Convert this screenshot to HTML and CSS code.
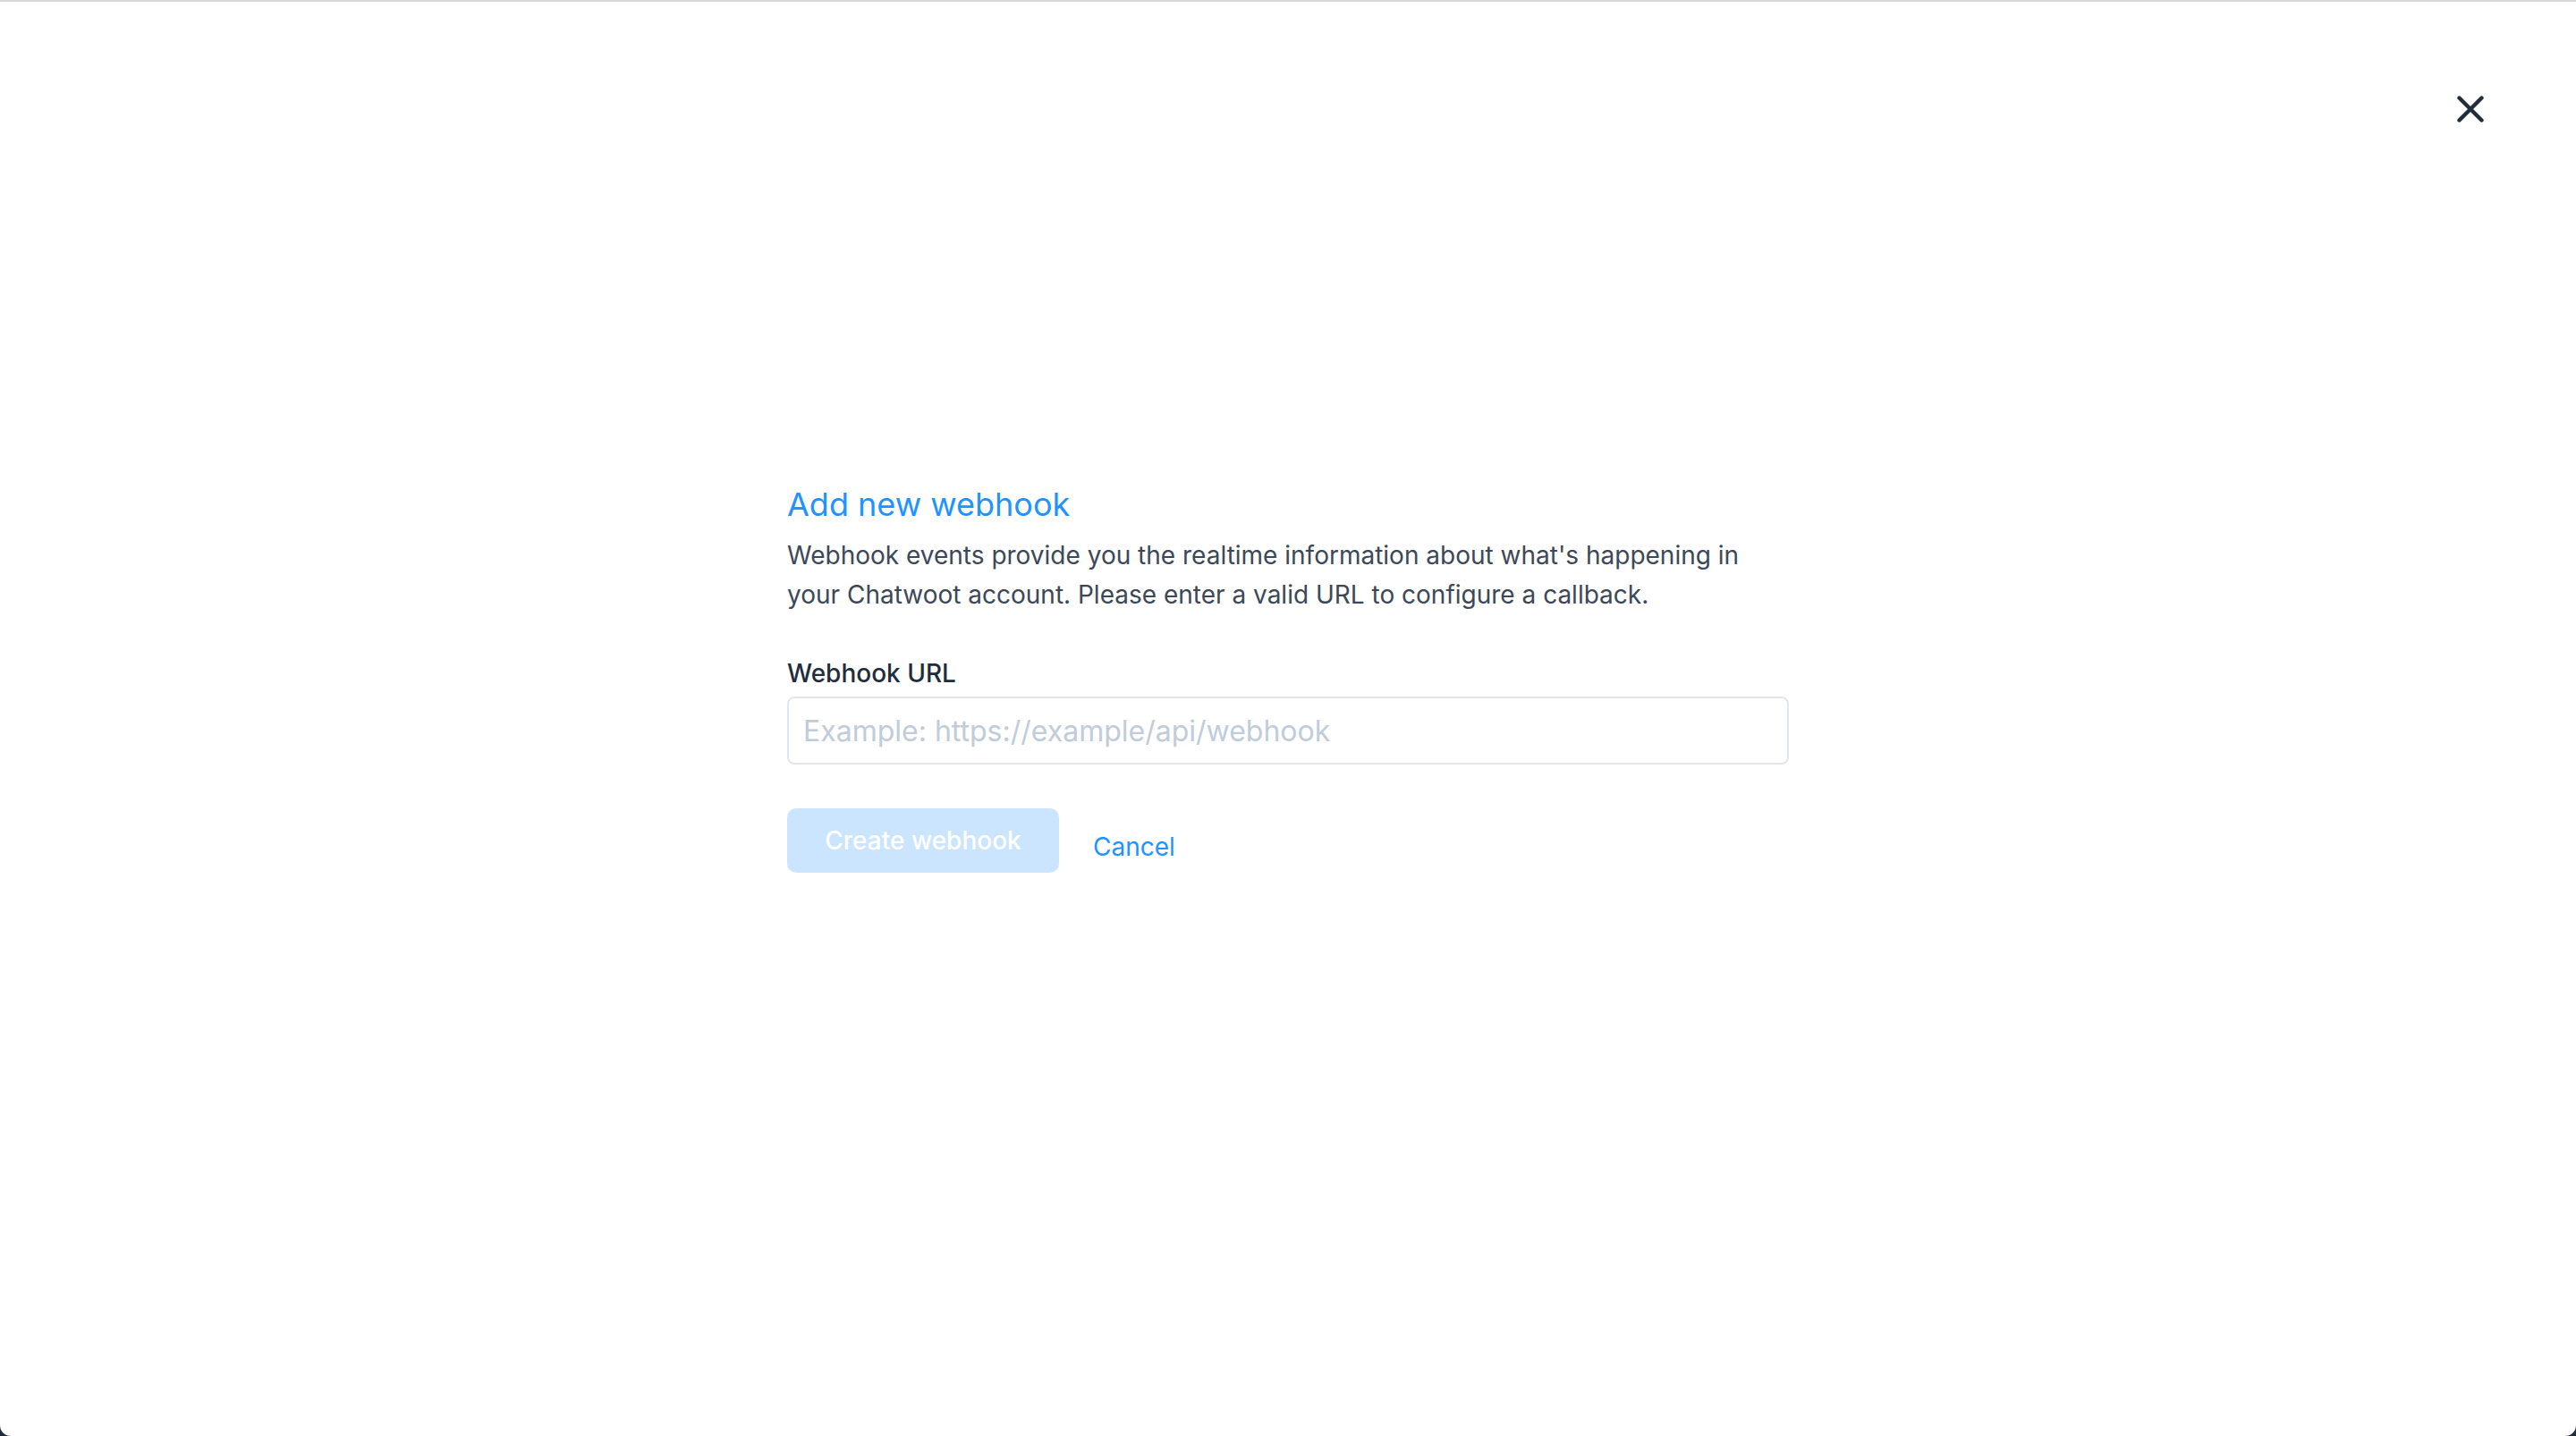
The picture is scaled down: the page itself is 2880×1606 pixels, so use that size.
FILE: index.html
```html
<!DOCTYPE html>
<html lang="en">
<head>
<meta charset="utf-8">
<title>Add new webhook</title>
<link rel="stylesheet" href="styles.css">
</head>
<body>
<div class="panel">
  <div class="header">
    <button class="close" aria-label="Close">
      <svg width="30" height="30" viewBox="0 0 30 30" fill="none" stroke="#1f2d3d" stroke-width="4.4" stroke-linecap="round">
        <path d="M2.5 2.5 L27.5 27.5 M27.5 2.5 L2.5 27.5"/>
      </svg>
    </button>
  </div>
  <div class="content">
    <h2 class="title">Add new webhook</h2>
    <p class="desc">Webhook events provide you the realtime information about what's happening in your Chatwoot account. Please enter a valid URL to configure a callback.</p>
    <label class="label" for="url">Webhook URL</label>
    <input id="url" class="input" type="text" placeholder="Example: https://example/api/webhook">
    <div class="actions">
      <button class="btn-primary" disabled>Create webhook</button>
      <a class="cancel" href="#">Cancel</a>
    </div>
  </div>
</div>
</body>
</html>
```

FILE: styles.css
```css
html, body {
  margin: 0;
  padding: 0;
}
body {
  background: #1f2d3d;
  font-family: Inter, "Noto Sans", sans-serif;
  width: 2880px;
  height: 1606px;
  overflow: hidden;
}
.panel {
  box-sizing: border-box;
  width: 2880px;
  height: 1606px;
  background: #ffffff;
  border-top: 2px solid #d5d9de;
  border-radius: 0 0 12px 12px;
  display: flex;
  flex-direction: column;
}
.header {
  display: flex;
  justify-content: flex-end;
  padding: 92px 90px 0 0;
}
.close {
  width: 56px;
  height: 56px;
  border: none;
  background: transparent;
  padding: 0;
  display: flex;
  align-items: center;
  justify-content: center;
  cursor: pointer;
}
.content {
  width: 1120px;
  margin: 390px auto 0;
  display: flex;
  flex-direction: column;
}
.title {
  margin: 0;
  font-size: 36px;
  line-height: 48px;
  font-weight: 400;
  color: #1f93ff;
}
.desc {
  margin: 11px 0 0;
  font-size: 28px;
  line-height: 44px;
  color: #3c4858;
}
.label {
  margin-top: 44px;
  font-size: 28px;
  line-height: 44px;
  font-weight: 500;
  color: #1f2d3d;
}
.input {
  box-sizing: border-box;
  margin-top: 4px;
  width: 1120px;
  height: 76px;
  border: 2px solid #e0e6ed;
  border-radius: 8px;
  padding: 0 16px;
  font-family: Inter, "Noto Sans", sans-serif;
  font-size: 32px;
  color: #1f2d3d;
  outline: none;
}
.input::placeholder {
  color: #c0ccda;
}
.actions {
  margin-top: 49px;
  display: flex;
  align-items: center;
  gap: 38px;
}
.btn-primary {
  height: 72px;
  width: 304px;
  border: none;
  border-radius: 10px;
  background: #cce5fe;
  color: #ffffff;
  font-family: Inter, "Noto Sans", sans-serif;
  font-size: 28px;
  font-weight: 500;
  padding: 0;
}
.cancel {
  padding-top: 14px;
  font-size: 28px;
  color: #1f93ff;
  text-decoration: none;
}
```
